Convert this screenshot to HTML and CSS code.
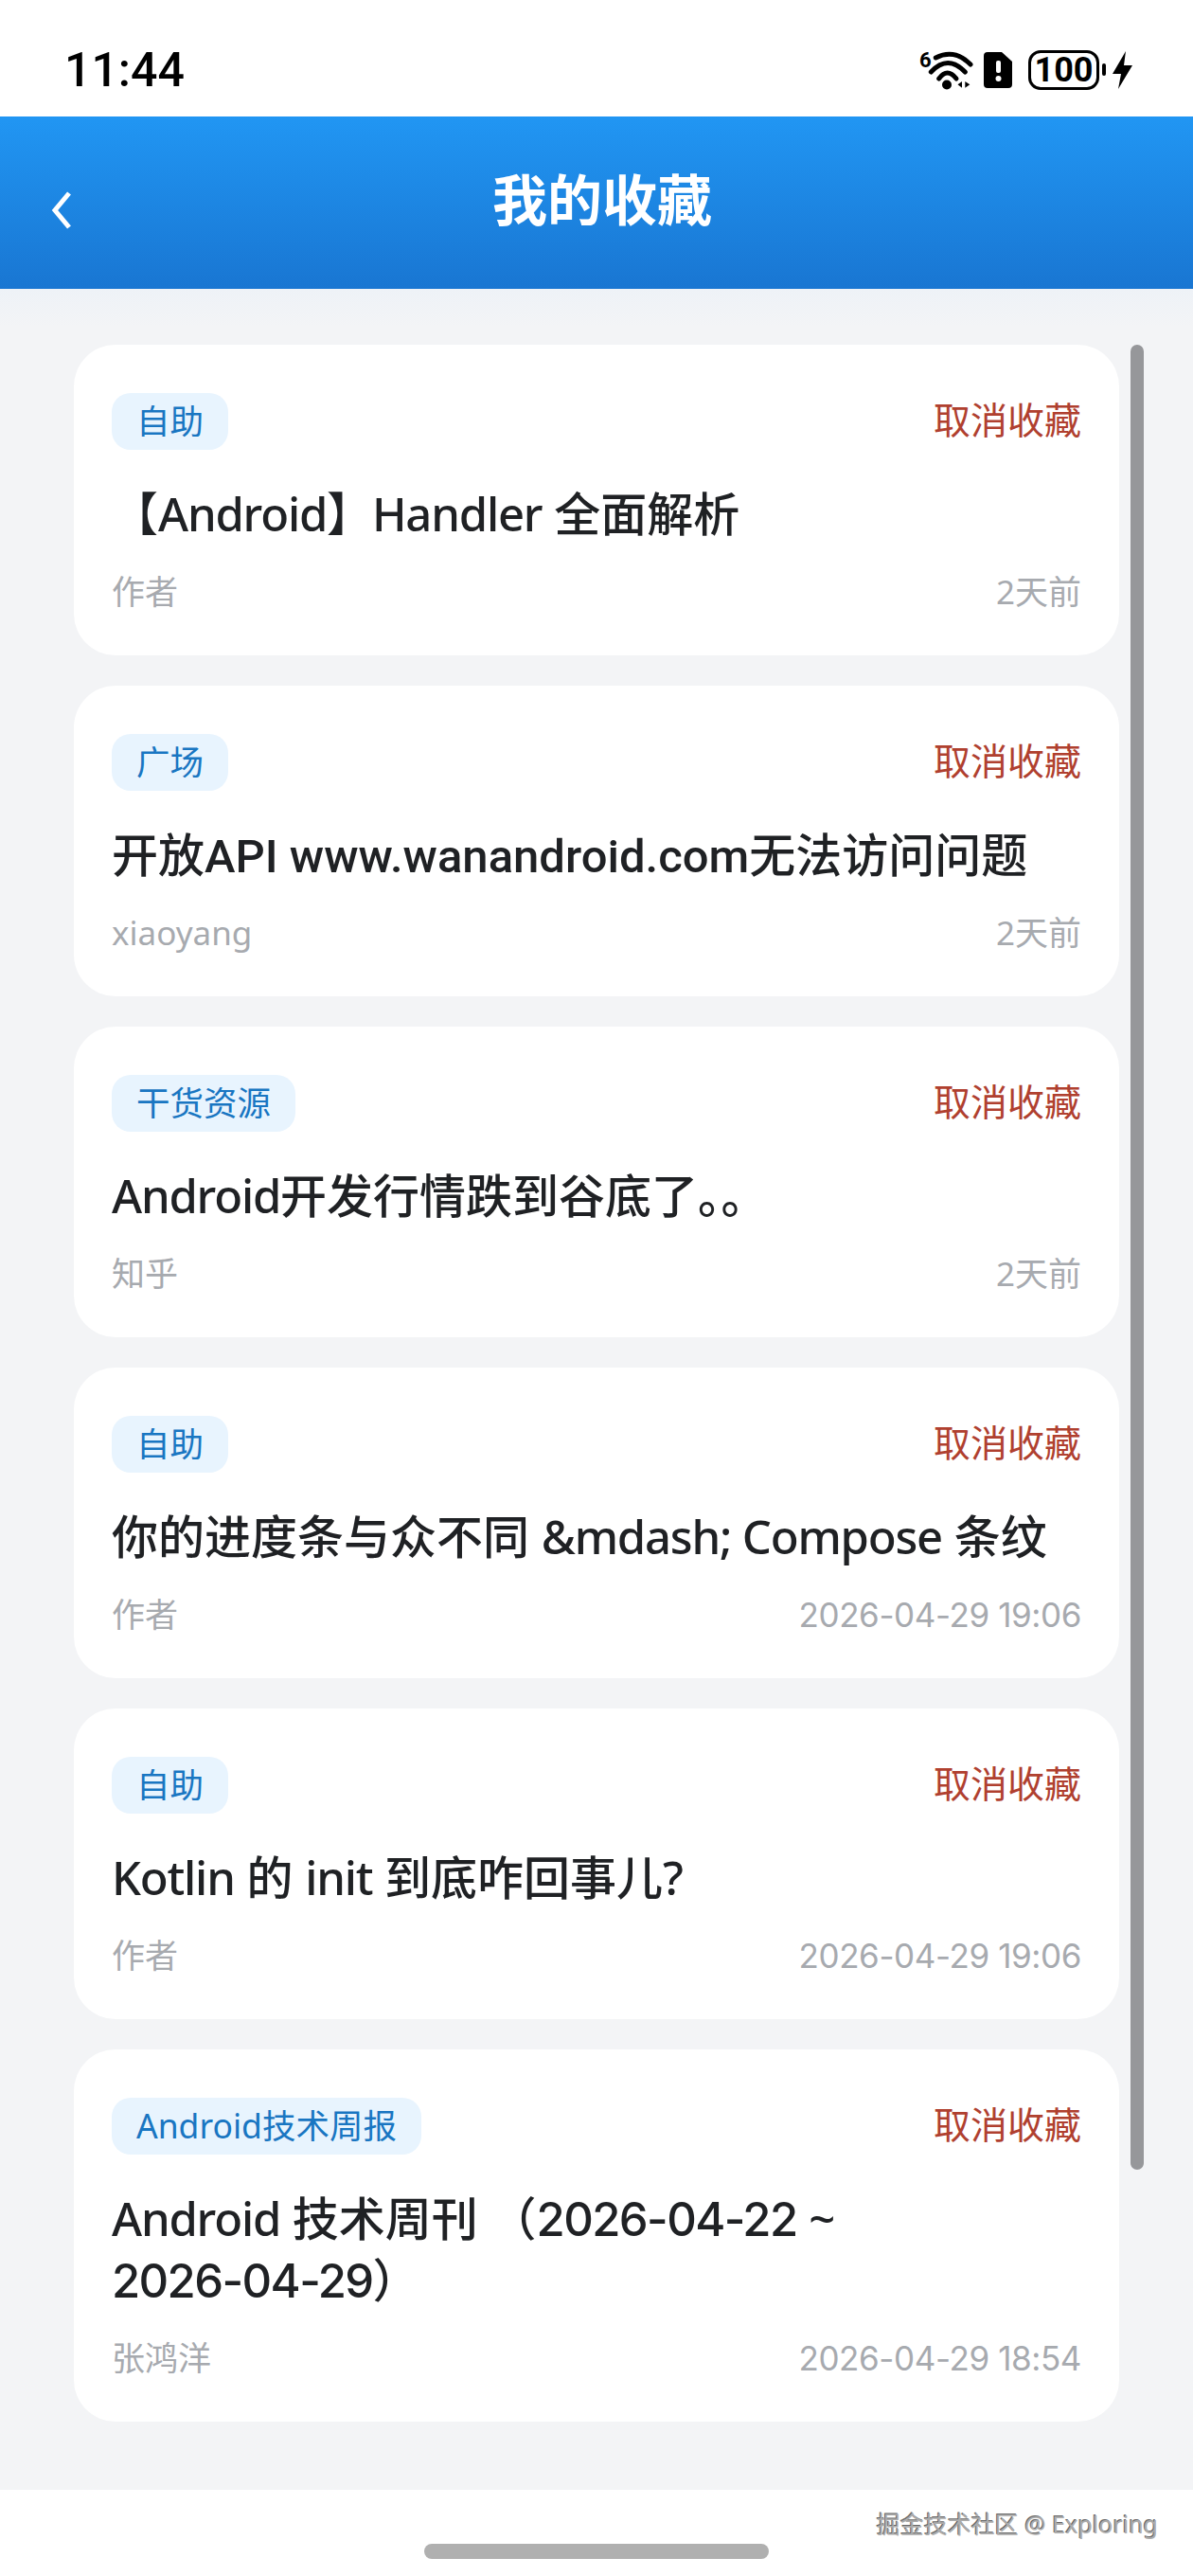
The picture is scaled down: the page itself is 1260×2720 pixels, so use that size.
FILE: index.html
```html
<!doctype html>
<html lang="zh">
<head>
<meta charset="utf-8">
<meta name="viewport" content="width=device-width, initial-scale=1.0">
<title>我的收藏</title>
<link rel="stylesheet" href="styles.css">
</head>
<body>
<div class="phone">
    <div class="status_bar">
        <span class="time">11:44</span>
        <div class="status_icons">
            <svg class="icon_wifi" viewBox="0 0 60 46" width="60" height="46">
                <text x="1" y="20" class="wifi_six">6</text>
                <path d="M18.3 10 Q38 0 55 17" fill="none" stroke="#000" stroke-width="5" stroke-linecap="round"/>
                <path d="M13.3 25 Q31 6 49.3 25" fill="none" stroke="#000" stroke-width="5" stroke-linecap="round"/>
                <path d="M21.7 32 Q30.5 20 40 32" fill="none" stroke="#000" stroke-width="5" stroke-linecap="round"/>
                <circle cx="30" cy="38.5" r="5"/>
                <polygon points="41.5,38.3 46,35 46,41.7"/>
                <polygon points="49.3,35 49.3,41.7 54.3,38.3"/>
            </svg>
            <svg class="icon_sim" viewBox="0 0 30 38" width="30" height="38">
                <path d="M4 0 H19 L30 10 V34 Q30 38 26 38 H4 Q0 38 0 34 V4 Q0 0 4 0 Z"/>
                <rect x="13" y="9" width="5" height="13" rx="2" fill="#fff"/>
                <circle cx="15.5" cy="28" r="3" fill="#fff"/>
            </svg>
            <div class="battery"><span class="battery_level">100</span></div>
            <span class="battery_nub"></span>
            <svg class="icon_bolt" viewBox="0 0 21 40" width="21" height="40">
                <polygon points="14,0 0,24 9,24 6,40 21,15 12,15"/>
            </svg>
        </div>
    </div>

    <div class="app_bar">
        <svg class="back_icon" viewBox="0 0 23 40" width="23" height="40">
            <path d="M20 2 L5 20 L20 38" fill="none" stroke="#fff" stroke-width="5"/>
        </svg>
        <h1 class="app_title">我的收藏</h1>
    </div>

    <div class="list">
        <div class="card">
            <div class="card_top"><span class="tag">自助</span><span class="cancel">取消收藏</span></div>
            <div class="card_title">【<span class="tight">Android】Handler</span> 全面解析</div>
            <div class="card_meta"><span>作者</span><span>2天前</span></div>
        </div>
        <div class="card">
            <div class="card_top"><span class="tag">广场</span><span class="cancel">取消收藏</span></div>
            <div class="card_title">开放<span class="url">API www.wanandroid.com</span>无法访问问题</div>
            <div class="card_meta"><span>xiaoyang</span><span>2天前</span></div>
        </div>
        <div class="card">
            <div class="card_top"><span class="tag">干货资源</span><span class="cancel">取消收藏</span></div>
            <div class="card_title"><span class="tight">Android</span>开发行情跌到谷底了。。</div>
            <div class="card_meta"><span>知乎</span><span>2天前</span></div>
        </div>
        <div class="card">
            <div class="card_top"><span class="tag">自助</span><span class="cancel">取消收藏</span></div>
            <div class="card_title">你的进度条与众不同 <span class="tight">&amp;mdash; Compose</span> 条纹</div>
            <div class="card_meta"><span>作者</span><span class="num">2026-04-29 19:06</span></div>
        </div>
        <div class="card">
            <div class="card_top"><span class="tag">自助</span><span class="cancel">取消收藏</span></div>
            <div class="card_title"><span class="tight">Kotlin</span> 的 <span class="tight">init</span> 到底咋回事儿?</div>
            <div class="card_meta"><span>作者</span><span class="num">2026-04-29 19:06</span></div>
        </div>
        <div class="card">
            <div class="card_top"><span class="tag">Android技术周报</span><span class="cancel">取消收藏</span></div>
            <div class="card_title"><span class="tight">Android</span> 技术周刊 （<span class="num">2026-04-22</span> ~<br><span class="num">2026-04-29</span>）</div>
            <div class="card_meta"><span>张鸿洋</span><span class="num">2026-04-29 18:54</span></div>
        </div>
        <div class="scrollbar"></div>
    </div>

    <div class="footer">
        <span class="watermark">掘金技术社区 @ Exploring</span>
        <span class="home_bar"></span>
    </div>
</div>
</body>
</html>
```

FILE: styles.css
```css
body {
    margin: 0;
    background-color: #ffffff;
    font-family: "Noto Sans", "Noto Sans CJK SC", sans-serif;
}
.phone {
    display: flex;
    flex-direction: column;
    height: 2720px;
    overflow: hidden;
}

/* status bar */
.status_bar {
    height: 123px;
    display: flex;
    justify-content: space-between;
    align-items: center;
    padding: 24px 64px 0 68px;
    box-sizing: border-box;
}
.time {
    font-family: Roboto, sans-serif;
    font-size: 50px;
    font-weight: 500;
    color: #000000;
}
.status_icons {
    display: flex;
    align-items: center;
}
.icon_wifi {
    overflow: visible;
}
.wifi_six {
    font-family: Roboto, sans-serif;
    font-size: 22px;
    font-weight: 700;
}
.icon_sim {
    margin-left: 9px;
}
.battery {
    margin-left: 17px;
    width: 75px;
    height: 42px;
    box-sizing: border-box;
    border: 3px solid #000000;
    border-radius: 13px;
    display: flex;
    align-items: center;
    justify-content: center;
}
.battery_level {
    font-family: Roboto, sans-serif;
    font-size: 36px;
    font-weight: 700;
    line-height: 36px;
}
.battery_nub {
    margin-left: 3px;
    width: 4px;
    height: 13px;
    border-radius: 2px;
    background-color: #000000;
}
.icon_bolt {
    margin-left: 7px;
}

/* app bar */
.app_bar {
    height: 182px;
    display: flex;
    align-items: center;
    background: linear-gradient(#2196f3, #1976d2);
    padding-left: 53px;
}
.back_icon {
    margin-top: 16px;
}
.app_title {
    margin: 0;
    flex: 1;
    padding: 0 124px 12px 60px;
    box-sizing: border-box;
    text-align: center;
    color: #ffffff;
    font-size: 58px;
    font-weight: 700;
}

/* list */
.list {
    flex: 1;
    position: relative;
    background: linear-gradient(#eef2f7, #f3f4f6 40px);
    padding: 59px 78px 0 78px;
    display: flex;
    flex-direction: column;
    gap: 32px;
}
.card {
    background-color: #ffffff;
    border-radius: 44px;
    padding: 51px 40px 42px 40px;
}
.card_top {
    display: flex;
    justify-content: space-between;
    align-items: center;
    height: 60px;
}
.tag {
    background-color: #e8f4fe;
    color: #1976c2;
    font-size: 35.5px;
    line-height: 58px;
    padding: 0 26px 2px 26px;
    border-radius: 20px;
}
.cancel {
    color: #b0402f;
    font-size: 39px;
    line-height: 56px;
    margin-bottom: 4px;
}
.card_title {
    margin-top: 35px;
    color: #1f2124;
    font-size: 49px;
    font-weight: 500;
    line-height: 65px;
}
.card_meta {
    margin-top: 25px;
    display: flex;
    justify-content: space-between;
    color: #a7aaaf;
    font-size: 35px;
    line-height: 50px;
}
.num {
    font-family: Inter, sans-serif;
}
.card_title .num {
    letter-spacing: -1.6px;
    line-height: 0;
}
.card_meta .num {
    letter-spacing: -0.4px;
}
.url {
    font-family: Roboto, sans-serif;
    letter-spacing: 0px;
    line-height: 0;
}
.tight {
    letter-spacing: -1.2px;
}
.scrollbar {
    position: absolute;
    top: 59px;
    left: 1194px;
    width: 14px;
    height: 1927px;
    border-radius: 7px;
    background-color: #96979a;
}

/* footer */
.footer {
    height: 91px;
    position: relative;
    background-color: #ffffff;
    display: flex;
    justify-content: center;
}
.watermark {
    position: absolute;
    right: 37px;
    top: 14px;
    font-size: 25px;
    line-height: 44px;
    color: #acacac;
    text-shadow: -1px -1px 0 #666666;
}
.home_bar {
    margin-top: 57px;
    width: 364px;
    height: 16px;
    border-radius: 8px;
    background-color: #b0b0b0;
}
```
